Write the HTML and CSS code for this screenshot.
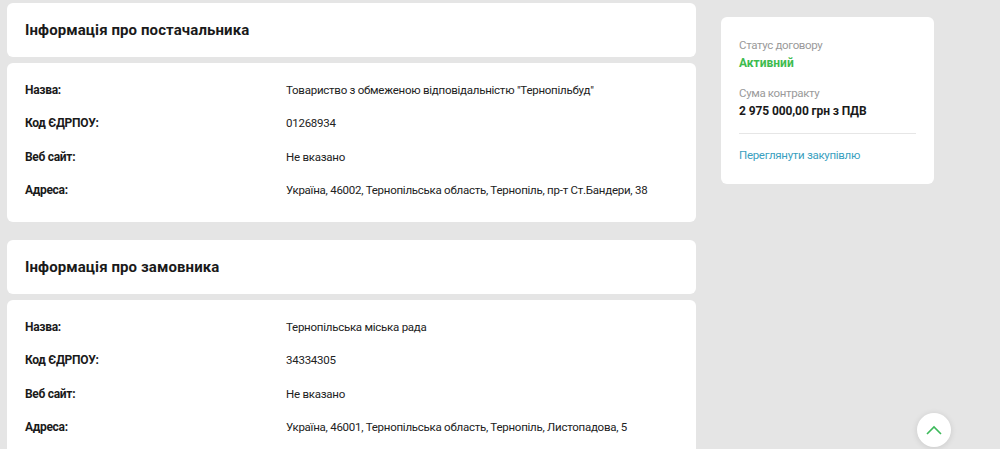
FILE: index.html
```html
<!DOCTYPE html>
<html lang="uk">
<head>
  <meta charset="UTF-8" />
  <meta name="viewport" content="width=device-width, initial-scale=1.0"/>
  <title>Інформація про договір</title>
  <link rel="stylesheet" href="styles.css">
</head>
<body>
  <div class="page">
    <main class="main">
      <section class="block">
        <div class="block-head">
          <h2>Інформація про постачальника</h2>
        </div>
        <div class="block-body">
          <div class="row"><span class="label">Назва:</span><span class="value">Товариство з обмеженою відповідальністю "Тернопільбуд"</span></div>
          <div class="row"><span class="label">Код ЄДРПОУ:</span><span class="value">01268934</span></div>
          <div class="row"><span class="label">Веб сайт:</span><span class="value">Не вказано</span></div>
          <div class="row"><span class="label">Адреса:</span><span class="value">Україна, 46002, Тернопільська область, Тернопіль, пр-т Ст.Бандери, 38</span></div>
        </div>
      </section>

      <section class="block">
        <div class="block-head">
          <h2>Інформація про замовника</h2>
        </div>
        <div class="block-body">
          <div class="row"><span class="label">Назва:</span><span class="value">Тернопільська міська рада</span></div>
          <div class="row"><span class="label">Код ЄДРПОУ:</span><span class="value">34334305</span></div>
          <div class="row"><span class="label">Веб сайт:</span><span class="value">Не вказано</span></div>
          <div class="row"><span class="label">Адреса:</span><span class="value">Україна, 46001, Тернопільська область, Тернопіль, Листопадова, 5</span></div>
        </div>
      </section>
    </main>

    <aside class="side">
      <div class="summary">
        <p class="caption">Статус договору</p>
        <p class="status">Активний</p>
        <p class="caption">Сума контракту</p>
        <p class="amount">2 975 000,00 грн з ПДВ</p>
        <hr>
        <a class="link" href="#">Переглянути закупівлю</a>
      </div>
    </aside>
  </div>

  <button class="to-top" aria-label="Вгору">
    <svg width="16" height="10" viewBox="0 0 16 10"><path d="M1 9 L8 2 L15 9" fill="none" stroke="#3cb95a" stroke-width="1.6"/></svg>
  </button>
</body>
</html>
```

FILE: styles.css
```css
body {
  margin: 0;
  background: #e5e5e5;
  font-family: Roboto, 'Noto Sans', sans-serif;
  color: #1a1a1a;
  overflow: hidden;
}

.page {
  display: flex;
  align-items: flex-start;
  padding: 3px 0 0 7px;
}

.main {
  width: 689px;
  display: flex;
  flex-direction: column;
  gap: 18px;
}

.block {
  display: flex;
  flex-direction: column;
  gap: 6px;
}

.block-head {
  background: #fff;
  border-radius: 6px;
  height: 54px;
  display: flex;
  align-items: center;
  padding: 0 18px;
}

.block-head h2 {
  margin: 0 0 1px;
  font-size: 15px;
  font-weight: 700;
  letter-spacing: 0.1px;
}

.block-body {
  background: #fff;
  border-radius: 6px;
  padding: 10px 18px 15px;
}

.row {
  display: flex;
  height: 33.5px;
  align-items: center;
  font-size: 12px;
}

.label {
  flex: 0 0 261px;
  font-weight: 700;
  letter-spacing: -0.3px;
}

.value {
  flex: 1;
  white-space: nowrap;
  font-size: 11.5px;
  letter-spacing: -0.25px;
  color: #222;
}

.side {
  margin: 14px 0 0 25px;
}

.summary {
  width: 177px;
  background: #fff;
  border-radius: 6px;
  padding: 19px 18px 22px;
  font-size: 12px;
}

.summary p {
  margin: 0;
  line-height: 18px;
}

.caption {
  color: #9a9a9a;
  font-size: 11.5px;
  letter-spacing: -0.35px;
}

.status {
  color: #3dbb4e;
  font-weight: 700;
  margin-bottom: 12px !important;
}

.amount {
  font-weight: 700;
  letter-spacing: -0.1px;
}

.summary hr {
  border: none;
  border-top: 1px solid #e6e6e6;
  margin: 13px 0 14px;
}

.link {
  color: #3a9fc0;
  text-decoration: none;
  font-size: 11.5px;
  letter-spacing: -0.3px;
}

.to-top {
  position: fixed;
  left: 917px;
  top: 413px;
  width: 34px;
  height: 34px;
  border-radius: 50%;
  border: none;
  background: #fff;
  box-shadow: 0 1px 6px rgba(0,0,0,0.12);
  display: flex;
  align-items: center;
  justify-content: center;
  padding: 0;
}
```
